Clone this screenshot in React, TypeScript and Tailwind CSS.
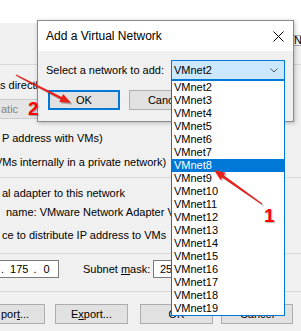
import React from 'react';

type Pt = [number, number];

// Tapered arrow shape: thin at the tail, widening into a triangular head at the tip
function arrowPoints(tail: Pt, tip: Pt, head = 11, half = 4.5, w0 = 0.5, w1 = 1.3) {
  const dx = tip[0] - tail[0];
  const dy = tip[1] - tail[1];
  const len = Math.hypot(dx, dy);
  const ux = dx / len;
  const uy = dy / len;
  const px = -uy;
  const py = ux;
  const bx = tip[0] - ux * head;
  const by = tip[1] - uy * head;
  const pts: Pt[] = [
    [tail[0] + px * w0, tail[1] + py * w0],
    [bx + px * w1, by + py * w1],
    [bx + px * half, by + py * half],
    tip,
    [bx - px * half, by - py * half],
    [bx - px * w1, by - py * w1],
    [tail[0] - px * w0, tail[1] - py * w0],
  ];
  return pts.map((p) => p.map((n) => n.toFixed(1)).join(',')).join(' ');
}

const networks = Array.from({ length: 18 }, (_, i) => `VMnet${i + 2}`);

export default function App() {
  const arrow1 = arrowPoints([262, 204], [214, 170]);
  const arrow2 = arrowPoints([16, 75], [71, 103]);

  return (
    <div className="relative w-[301px] h-[331px] overflow-hidden bg-[#f0f0f0] text-[11px] leading-[12px] text-black font-['Liberation_Sans',Arial,sans-serif]">
      {/* background: Virtual Network Editor */}
      <div className="h-[23px] bg-white" />
      <div className="h-[41px] flex justify-end">
        <div className="w-[40px] flex flex-col">
          <div className="h-[12px] bg-white" />
          <div className="h-[11px] border-y border-[#a8a8a8] bg-[#f7f7f7] pl-[33px] leading-[9px] whitespace-nowrap overflow-hidden">
            Network
          </div>
        </div>
      </div>
      <div className="h-px bg-[#d9d9d9]" />

      <div className="mt-[14px] h-[12px] whitespace-nowrap">s directly to the external network)</div>

      <div className="mt-[8px] h-[20px] w-[120px] border-y border-r border-[#cccccc] bg-[#e5e5e5] text-[#838383] flex items-center pl-[1px]">
        atic
      </div>

      <div className="mt-[13px] h-[12px] pl-[2px] whitespace-nowrap">P address with VMs)</div>
      <div className="mt-[12px] h-[12px] whitespace-nowrap -ml-[5px]">VMs internally in a private network)</div>
      <div className="mt-[9px] h-px bg-[#d9d9d9]" />

      <div className="mt-[9px] h-[12px] pl-[2px] whitespace-nowrap">al adapter to this network</div>
      <div className="mt-[7px] h-[12px] pl-[6px] whitespace-nowrap">name: VMware Network Adapter VMnet8</div>
      <div className="mt-[11px] h-[12px] pl-[2px] whitespace-nowrap">ce to distribute IP address to VMs</div>
      <div className="mt-[12px] h-px bg-[#d9d9d9]" />

      <div className="mt-[6px] h-[18px] flex items-center">
        <div className="w-[59px] h-full border-y border-r border-[#7a7a7a] bg-white flex items-center whitespace-nowrap">
          <span className="ml-[1px]">.</span>
          <span className="ml-[6px]">175</span>
          <span className="ml-[5px]">.</span>
          <span className="ml-[7px]">0</span>
        </div>
        <span className="ml-[24px] w-[70px] whitespace-nowrap">
          Subnet <span className="underline">m</span>ask:
        </span>
        <div className="w-[110px] h-full border border-[#7a7a7a] bg-white flex items-center pl-[6px]">255.255.255.0</div>
      </div>
      <div className="mt-[13px] h-px bg-[#d9d9d9]" />

      <div className="mt-[12px] h-[20px] flex">
        <div className="w-[45px] h-full border-y border-r border-[#adadad] bg-[#e1e1e1] flex items-center pl-[1px] whitespace-nowrap">
          por<span className="underline">t</span>...
        </div>
        <div className="ml-[10px] w-[73px] h-full border border-[#adadad] bg-[#e1e1e1] flex items-center justify-center">
          E<span className="underline">x</span>port...
        </div>
        <div className="ml-[12px] w-[73px] h-full border border-[#adadad] bg-[#e1e1e1] flex items-center justify-center">OK</div>
        <div className="ml-[8px] w-[72px] h-full border border-[#adadad] bg-[#e1e1e1] flex items-center justify-center">Cancel</div>
      </div>

      {/* dialog */}
      <div className="absolute left-[37px] top-[20px] w-[257px] h-[102px] border border-[#8a8a8a] bg-[#f0f0f0] flex flex-col z-10 shadow-[1px_1px_4px_rgba(0,0,0,0.25)]">
        <div className="h-[30px] bg-white flex items-center justify-between pl-[8px] pr-[9px] text-[12px]">
          <span>Add a Virtual Network</span>
          <svg width="11" height="11" viewBox="0 0 11 11">
            <path d="M0.5 0.5 L10.5 10.5 M10.5 0.5 L0.5 10.5" stroke="#000" strokeWidth="1" fill="none" />
          </svg>
        </div>
        <div className="flex-1 pl-[8px] pr-[8px] pt-[9px]">
          <div className="flex items-center justify-between h-[20px]">
            <span>Select a network to add:</span>
            <div className="relative w-[114px] h-[20px] border border-[#0078d7] bg-[#cce8ff] flex items-center pl-[2px]">
              VMnet2
              <svg className="absolute right-[6px] top-[7px]" width="8" height="5" viewBox="0 0 8 5">
                <path d="M0.5 0.5 L4 4 L7.5 0.5" stroke="#555" strokeWidth="1" fill="none" />
              </svg>
              <ul className="absolute left-[-1px] top-[19px] w-[114px] border border-[#0078d7] bg-white">
                {networks.map((n) => (
                  <li
                    key={n}
                    className={
                      n === 'VMnet8'
                        ? 'h-[13px] leading-[13px] pl-[2px] bg-[#0078d7] text-white'
                        : 'h-[13px] leading-[13px] pl-[2px]'
                    }
                  >
                    {n}
                  </li>
                ))}
              </ul>
            </div>
          </div>
          <div className="mt-[10px] flex pl-[2px]">
            <div className="w-[72px] h-[20px] border-2 border-[#0078d7] bg-[#e1e1e1] flex items-center justify-center">OK</div>
            <div className="ml-[9px] w-[72px] h-[20px] border border-[#adadad] bg-[#e1e1e1] flex items-center justify-center">Cancel</div>
          </div>
        </div>
      </div>

      {/* annotations */}
      <svg className="absolute inset-0 z-20 pointer-events-none" width="301" height="331">
        <g transform="translate(1.5,1.5)" fill="rgba(0,0,0,0.25)">
          <polygon points={arrow1} />
          <polygon points={arrow2} />
        </g>
        <g fill="#e8201c">
          <polygon points={arrow1} />
          <polygon points={arrow2} />
        </g>
      </svg>
      <span className="absolute left-[264px] top-[206px] z-20 text-[19px] leading-none font-bold text-[#ff0000] [text-shadow:1px_1px_1px_rgba(0,0,0,0.3)]">
        1
      </span>
      <span className="absolute left-[28px] top-[99px] z-20 text-[19px] leading-none font-bold text-[#ff0000] [text-shadow:1px_1px_1px_rgba(0,0,0,0.3)]">
        2
      </span>
    </div>
  );
}
